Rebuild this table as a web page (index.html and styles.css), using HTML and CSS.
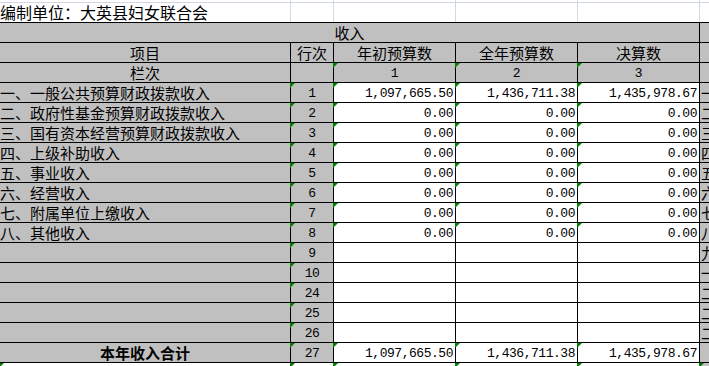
FILE: index.html
```html
<!DOCTYPE html>
<html lang="zh">
<head>
<meta charset="utf-8">
<link rel="stylesheet" href="styles.css">
</head>
<body>
<div class="sheet">
  <div class="top">
    <div class="w"></div><div class="w"></div><div class="w"></div><div class="w"></div><div class="w"></div><div class="w"></div>
    <div class="w title">编制单位：大英县妇女联合会</div><div class="w"></div><div class="w"></div><div class="w"></div><div class="w"></div><div class="w"></div>
  </div>
  <div class="tbl">
    <div class="g span5 ctr">收入</div><div class="g"></div>

    <div class="g ctr">项目</div><div class="g ctr">行次</div><div class="g ctr">年初预算数</div><div class="g ctr">全年预算数</div><div class="g ctr">决算数</div><div class="g"></div>

    <div class="g ctr">栏次</div><div class="g"></div><div class="g ctr num t">1</div><div class="g ctr num t">2</div><div class="g ctr num t">3</div><div class="g"></div>

    <div class="g">一、一般公共预算财政拨款收入</div><div class="g ctr num t">1</div><div class="w r num t">1,097,665.50</div><div class="w r num t">1,436,711.38</div><div class="w r num t">1,435,978.67</div><div class="g f">一</div>
    <div class="g">二、政府性基金预算财政拨款收入</div><div class="g ctr num t">2</div><div class="w r num t">0.00</div><div class="w r num t">0.00</div><div class="w r num t">0.00</div><div class="g f">二</div>
    <div class="g">三、国有资本经营预算财政拨款收入</div><div class="g ctr num t">3</div><div class="w r num t">0.00</div><div class="w r num t">0.00</div><div class="w r num t">0.00</div><div class="g f">三</div>
    <div class="g">四、上级补助收入</div><div class="g ctr num t">4</div><div class="w r num t">0.00</div><div class="w r num t">0.00</div><div class="w r num t">0.00</div><div class="g f">四</div>
    <div class="g">五、事业收入</div><div class="g ctr num t">5</div><div class="w r num t">0.00</div><div class="w r num t">0.00</div><div class="w r num t">0.00</div><div class="g f">五</div>
    <div class="g">六、经营收入</div><div class="g ctr num t">6</div><div class="w r num t">0.00</div><div class="w r num t">0.00</div><div class="w r num t">0.00</div><div class="g f">六</div>
    <div class="g">七、附属单位上缴收入</div><div class="g ctr num t">7</div><div class="w r num t">0.00</div><div class="w r num t">0.00</div><div class="w r num t">0.00</div><div class="g f">七</div>
    <div class="g">八、其他收入</div><div class="g ctr num t">8</div><div class="w r num t">0.00</div><div class="w r num t">0.00</div><div class="w r num t">0.00</div><div class="g f">八</div>
    <div class="g"></div><div class="g ctr num t">9</div><div class="w"></div><div class="w"></div><div class="w"></div><div class="g f">九</div>
    <div class="g"></div><div class="g ctr num t">10</div><div class="w"></div><div class="w"></div><div class="w"></div><div class="g f">一</div>
    <div class="g"></div><div class="g ctr num t">24</div><div class="w"></div><div class="w"></div><div class="w"></div><div class="g f">二</div>
    <div class="g"></div><div class="g ctr num t">25</div><div class="w"></div><div class="w"></div><div class="w"></div><div class="g f">二</div>
    <div class="g"></div><div class="g ctr num t">26</div><div class="w"></div><div class="w"></div><div class="w"></div><div class="g f">二</div>
    <div class="g ctr bold">本年收入合计</div><div class="g ctr num t">27</div><div class="w r num t">1,097,665.50</div><div class="w r num t">1,436,711.38</div><div class="w r num t">1,435,978.67</div><div class="g"></div>
    <div class="w t"></div><div class="w t"></div><div class="w t"></div><div class="w t"></div><div class="w t"></div><div class="g t"></div>
  </div>
</div>
</body>
</html>
```

FILE: styles.css
```css
html, body {
  margin: 0;
  padding: 0;
  overflow: hidden;
  background: #ffffff;
}
.sheet {
  width: 709px;
  height: 366px;
  overflow: hidden;
  font-family: "Noto Sans CJK SC", "Noto Sans", sans-serif;
  color: #000;
}
.top {
  display: grid;
  grid-template-columns: 290px 42px 121px 121px 121px 1fr;
  grid-template-rows: 2px 19px;
  gap: 1px;
  background: #d0d7e5;
}
.tbl {
  display: grid;
  grid-template-columns: 290px 42px 121px 121px 121px 1fr;
  grid-auto-rows: 19px;
  gap: 1px;
  background: #000;
  padding-top: 1px;
}
.w, .g {
  position: relative;
  font-size: 15px;
  line-height: 18px;
  padding-top: 1px;
  white-space: nowrap;
  overflow: visible;
  box-sizing: border-box;
  height: 100%;
}
.w { background: #ffffff; }
.g { background: #c0c0c0; }
.title {
  font-size: 16px;
  line-height: 19px;
  padding-top: 0;
}
.span5 { grid-column: 1 / span 5; }
.ctr { text-align: center; }
.r { text-align: right; }
.num {
  font-family: "Liberation Mono", "DejaVu Sans Mono", monospace;
  font-size: 13px;
  letter-spacing: -0.47px;
  line-height: 16px;
  padding-top: 3px;
}
.r.num { padding-right: 2px; }
.bold { font-weight: bold; }
.f { padding-left: 1px; overflow: hidden; }
.t::before {
  content: "";
  position: absolute;
  left: -1px;
  top: 0;
  width: 0;
  height: 0;
  border-top: 5px solid #008000;
  border-right: 5px solid transparent;
}
```
